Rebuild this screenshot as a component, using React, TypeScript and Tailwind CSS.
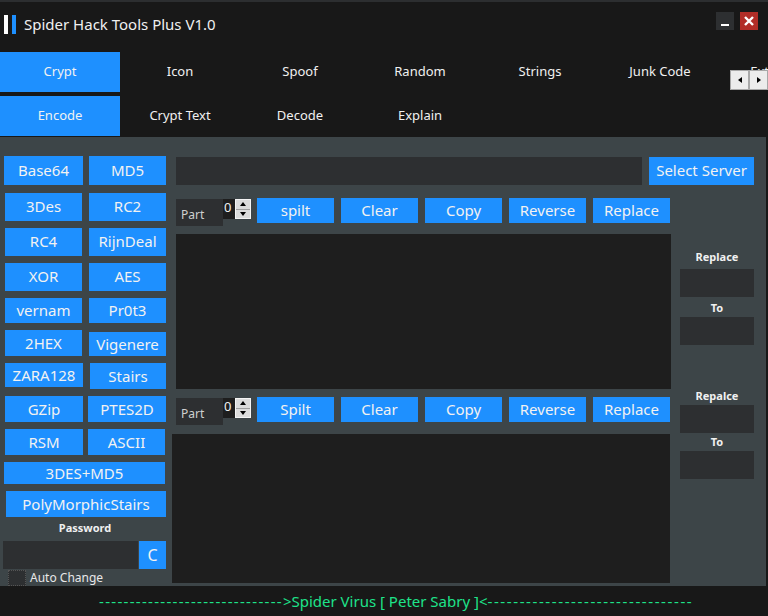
import React from "react";

const tabs1 = ["Crypt", "Icon", "Spoof", "Random", "Strings", "Junk Code", "Extension"];
const tabs2 = ["Encode", "Crypt Text", "Decode", "Explain"];
const actions = ["Clear", "Copy", "Reverse", "Replace"];

const blue = "bg-[#1e90ff] text-[#f2f2f2]";

function Btn({label, className}: {label: string; className: string}) {
    return (
        <div className={`${blue} flex items-center justify-center text-[15px] leading-none ${className}`}>
            {label}
        </div>
    );
}

function Spinner() {
    return (
        <div className="mt-[1px] flex h-[20px] w-[16px] flex-col border border-[#f4f4f4] bg-[#dcdcdc]">
            <div className="flex flex-1 items-center justify-center border-b border-[#a0a0a0]">
                <div className="h-0 w-0 border-x-[3px] border-b-[4px] border-x-transparent border-b-black"/>
            </div>
            <div className="flex flex-1 items-center justify-center">
                <div className="h-0 w-0 border-x-[3px] border-t-[4px] border-x-transparent border-t-black"/>
            </div>
        </div>
    );
}

function Toolbar({first}: {first: string}) {
    return (
        <div className="ml-[6px] flex items-start">
            <div className="mt-[1px] flex h-[27px] w-[47px] items-end bg-[#2d2f31] pb-[5px] pl-[5px] text-[12px] leading-none text-[#cfcfcf]">
                Part
            </div>
            <div className="mt-[1px] h-[20px] w-[12px] bg-[#1e1e1e] pl-[1px] text-[13px] leading-[16px] text-[#f0f0f0]">0</div>
            <Spinner/>
            <div className="ml-[6px] flex gap-[7px]">
                <Btn label={first} className="h-[25px] w-[77px]"/>
                {actions.map((a) => (
                    <Btn key={a} label={a} className="h-[25px] w-[77px]"/>
                ))}
            </div>
        </div>
    );
}

function LeftColumn() {
    return (
        <div className="flex w-[170px] flex-col">
            <div className="mt-[19px] flex h-[29px]">
                <Btn label="Base64" className="ml-[4px] w-[79px]"/>
                <Btn label="MD5" className="ml-[6px] w-[77px]"/>
            </div>
            <div className="mt-[8px] flex h-[28px]">
                <Btn label="3Des" className="ml-[5px] w-[77px]"/>
                <Btn label="RC2" className="ml-[7px] w-[77px]"/>
            </div>
            <div className="mt-[7px] flex h-[28px]">
                <Btn label="RC4" className="ml-[5px] w-[77px]"/>
                <Btn label="RijnDeal" className="ml-[7px] w-[77px]"/>
            </div>
            <div className="mt-[7px] flex h-[28px]">
                <Btn label="XOR" className="ml-[5px] w-[77px]"/>
                <Btn label="AES" className="ml-[7px] w-[77px]"/>
            </div>
            <div className="mt-[7px] flex h-[26px]">
                <Btn label="vernam" className="ml-[5px] w-[77px]"/>
                <Btn label="Pr0t3" className="ml-[7px] w-[77px]"/>
            </div>
            <div className="mt-[7px] flex h-[26px] items-end">
                <Btn label="2HEX" className="ml-[5px] h-[26px] w-[77px]"/>
                <Btn label="Vigenere" className="ml-[7px] h-[24px] w-[77px]"/>
            </div>
            <div className="mt-[7px] flex h-[26px] items-start">
                <Btn label="ZARA128" className="ml-[5px] h-[24px] w-[78px]"/>
                <Btn label="Stairs" className="ml-[7px] h-[26px] w-[76px]"/>
            </div>
            <div className="mt-[7px] flex h-[26px]">
                <Btn label="GZip" className="ml-[5px] w-[78px]"/>
                <Btn label="PTES2D" className="ml-[5px] w-[78px]"/>
            </div>
            <div className="mt-[7px] flex h-[26px]">
                <Btn label="RSM" className="ml-[5px] w-[78px]"/>
                <Btn label="ASCII" className="ml-[5px] w-[77px]"/>
            </div>
            <Btn label="3DES+MD5" className="ml-[4px] mt-[7px] h-[22px] w-[161px]"/>
            <Btn label="PolyMorphicStairs" className="ml-[6px] mt-[7px] h-[26px] w-[160px]"/>
            <div className="mt-[4px] h-[14px] text-center text-[11px] font-bold leading-[14px] text-[#f0f0f0]">Password</div>
            <div className="mt-[6px] flex h-[28px]">
                <div className="ml-[3px] w-[135px] bg-[#2d2f31]"/>
                <Btn label="C" className="ml-[1px] w-[27px] text-[16px]"/>
            </div>
            <div className="mt-[1px] flex items-center">
                <div className="ml-[8px] h-[16px] w-[18px] border border-dotted border-[#555] bg-[#2d2f31]"/>
                <span className="ml-[4px] text-[12px] leading-none text-[#e8e8e8]">Auto Change</span>
            </div>
        </div>
    );
}

function RightColumn() {
    const label = "h-[14px] text-center text-[11px] font-bold leading-[14px] text-[#f0f0f0]";
    const box = "h-[28px] w-[74px] bg-[#2d2f31]";
    return (
        <div className="ml-[10px] flex w-[74px] flex-col">
            <div className={`mt-[65px] ${label}`}>Replace</div>
            <div className={`mt-[5px] ${box}`}/>
            <div className={`mt-[4px] ${label}`}>To</div>
            <div className={`mt-[2px] ${box}`}/>
            <div className={`mt-[44px] ${label}`}>Repalce</div>
            <div className={`mt-[2px] ${box}`}/>
            <div className={`mt-[2px] ${label}`}>To</div>
            <div className={`mt-[2px] ${box}`}/>
        </div>
    );
}

export default function App() {
    return (
        <div className="relative flex h-[616px] w-[768px] flex-col overflow-hidden border-t-[2px] border-[#2c2e30] bg-[#181818] font-['Noto_Sans',sans-serif]">
            <header className="flex h-[50px] items-start">
                <div className="ml-[4px] mt-[13px] h-[19px] w-[4px] bg-white"/>
                <div className="ml-[4px] mt-[13px] h-[19px] w-[4px] bg-[#1e90ff]"/>
                <span className="ml-[8px] mt-[12px] text-[15px] leading-[20px] text-[#f0f0f0]">Spider Hack Tools Plus V1.0</span>
                <div className="ml-auto mt-[10px] flex h-[18px] w-[18px] items-end justify-center bg-[#2d2f31] pb-[4px]">
                    <div className="h-[2px] w-[8px] bg-white"/>
                </div>
                <div className="ml-[6px] mr-[10px] mt-[10px] flex h-[18px] w-[18px] items-center justify-center bg-[#b22d27]">
                    <svg width="12" height="12" viewBox="0 0 12 12">
                        <path d="M2 2 L10 10 M10 2 L2 10" stroke="white" strokeWidth="2.4"/>
                    </svg>
                </div>
            </header>

            <nav className="relative flex h-[40px] w-[840px]">
                {tabs1.map((t, i) => (
                    <div key={t}
                         className={`flex w-[120px] items-center justify-center text-[13px] ${i === 0 ? blue : "text-[#f0f0f0]"}`}>
                        {t}
                    </div>
                ))}
                <div className="absolute left-[730px] top-[18px] flex h-[20px]">
                    <div className="flex w-[19px] items-center justify-center border border-[#a8a8a8] bg-[#ececec]">
                        <div className="h-0 w-0 border-y-[3px] border-r-[4px] border-y-transparent border-r-black"/>
                    </div>
                    <div className="flex w-[19px] items-center justify-center border border-[#a8a8a8] bg-[#ececec]">
                        <div className="h-0 w-0 border-y-[3px] border-l-[4px] border-y-transparent border-l-black"/>
                    </div>
                </div>
            </nav>
            <nav className="mt-[4px] flex h-[40px]">
                {tabs2.map((t, i) => (
                    <div key={t}
                         className={`flex w-[120px] items-center justify-center text-[13px] ${i === 0 ? blue : "text-[#f0f0f0]"}`}>
                        {t}
                    </div>
                ))}
            </nav>

            <main className="mt-[1px] flex h-[449px] w-[766px] bg-[#3d4548]">
                <LeftColumn/>
                <div className="flex flex-col">
                    <div className="mt-[20px] flex h-[28px]">
                        <div className="ml-[6px] w-[466px] bg-[#2d2f31]"/>
                        <Btn label="Select Server" className="ml-[7px] w-[105px] pb-[2px]"/>
                    </div>
                    <div className="flex">
                        <div className="flex w-[500px] flex-col">
                            <div className="mt-[13px]">
                                <Toolbar first="spilt"/>
                            </div>
                            <div className="ml-[6px] mt-[8px] h-[155px] w-[495px] bg-[#1e1e1e]"/>
                            <div className="mt-[8px]">
                                <Toolbar first="Spilt"/>
                            </div>
                            <div className="ml-[2px] mt-[9px] h-[149px] w-[498px] bg-[#1e1e1e]"/>
                        </div>
                        <RightColumn/>
                    </div>
                </div>
            </main>

            <footer className="flex flex-1 items-center whitespace-nowrap pl-[99px] text-[15px] text-[#1ee38a]">
                <span className="tracking-[1.3px]">------------------------------</span>
                <span>&gt;Spider Virus [ Peter Sabry ]&lt;</span>
                <span className="tracking-[1.6px]">--------------------------------</span>
            </footer>
        </div>
    );
}
